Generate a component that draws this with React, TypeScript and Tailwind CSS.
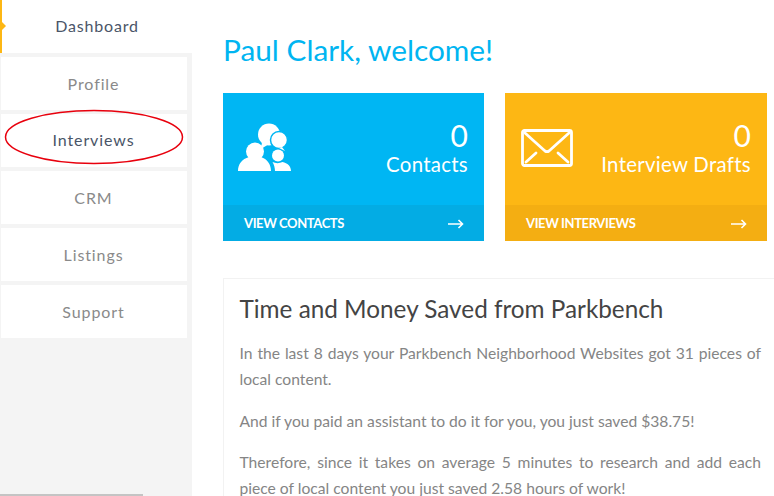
const items = [
  { label: "Profile", dark: false },
  { label: "Interviews", dark: true },
  { label: "CRM", dark: false },
  { label: "Listings", dark: false },
  { label: "Support", dark: false },
];

function Arrow() {
  return (
    <svg className="mt-[2px]" width="16" height="10" viewBox="0 0 16 10" fill="none" stroke="white" strokeWidth="1.6">
      <path d="M0 5h14.500M10.500 1l4 4-4 4" />
    </svg>
  );
}

function PeopleIcon() {
  return (
    <svg className="-mt-[4px]" width="54" height="50" viewBox="0 0 54 50" fill="white">
      <circle cx="31" cy="12.500" r="11" />
      <path d="M24 20l-1 7 8-5z" />
      <circle cx="41" cy="18" r="8.500" stroke="#00b6f3" strokeWidth="1.500" />
      <path d="M44 25l3 4-6-3z" />
      <circle cx="17" cy="29.500" r="9" />
      <path d="M0 49c0-7 4-12 11-14 4 2.500 8 2.500 12 0 6 2 10 7 10 14z" />
      <circle cx="40" cy="33.500" r="6" />
      <path d="M34.500 40c3 1.500 7 1.500 10 0 5 1 8.500 4 8.500 9H37c0-3-1-6.500-2.500-9z" />
    </svg>
  );
}

function MailIcon() {
  return (
    <svg className="ml-[1px] -mt-[3px]" width="52" height="38" viewBox="0 0 52 38" fill="none" stroke="white" strokeWidth="2.800" strokeLinecap="round" strokeLinejoin="round">
      <rect x="1.500" y="1.500" width="49" height="35" rx="2" />
      <path d="M4 4l20 18c1.500 1 2.500 1 4 0L48 4M5 33l10-9M47 33l-10-9" />
    </svg>
  );
}

function StatCard({ width, color, footer, count, label, link, icon }: { width: string; color: string; footer: string; count: string; label: string; link: string; icon: React.ReactNode }) {
  return (
    <div className={`${width} ${color} flex h-[148px] shrink-0 flex-col text-white`}>
      <div className="flex h-[112px] items-center justify-between pl-[15px] pr-[16px]">
        {icon}
        <div className="-mt-[7px] text-right">
          <div className="text-[30px] leading-[36px]">{count}</div>
          <div className="text-[20.400px] leading-[22px] tracking-[0.3px]">{label}</div>
        </div>
      </div>
      <div className={`${footer} flex h-[36px] items-center justify-between pl-[21px] pr-[20px]`}>
        <span className="mt-[1px] text-[13px] font-bold tracking-[-0.4px]">{link}</span>
        <Arrow />
      </div>
    </div>
  );
}

export default function App() {
  return (
    <div className="flex h-[496px] w-[774px] overflow-hidden bg-white font-['Lato',sans-serif]">
      <aside className="relative h-full w-[192px] shrink-0 bg-[#f4f4f4]">
        <div className="relative flex h-[53px] w-[192px] items-center justify-center border-l-2 border-[#fdb714] bg-white pb-[1px] text-[16px] tracking-[0.8px] text-[#4a5568]">
          Dashboard
          <span className="absolute left-0 top-[22px] h-0 w-0 border-y-[4px] border-l-[4px] border-y-transparent border-l-[#fdb714]" />
        </div>
        <div className="mt-[4px] flex w-[187px] flex-col gap-[4px] pl-[1px]">
          {items.map((item) => (
            <div
              key={item.label}
              className={`flex h-[53px] items-center justify-center bg-white pr-[1px] text-[16px] tracking-[0.9px] ${item.dark ? "pb-[1px] text-[#4a5568]" : "text-[#8a8a8a]"}`}
            >
              {item.label}
            </div>
          ))}
        </div>
        <div className="absolute bottom-0 left-0 h-[2px] w-[143px] bg-[#c4c4c4]" />
        <svg className="absolute left-[4px] top-[109px]" width="181" height="56" viewBox="0 0 181 56" fill="none">
          <ellipse cx="90" cy="28" rx="88.500" ry="26.500" stroke="#e8000d" strokeWidth="1.500" />
        </svg>
      </aside>

      <main className="min-w-0 flex-1 pl-[31px]">
        <h1 className="mt-[31px] text-[29.800px] leading-[38px] text-[#00b5f1]">Paul Clark, welcome!</h1>
        <div className="mt-[24px] flex gap-[21px]">
          <StatCard width="w-[261px]" color="bg-[#00b6f3]" footer="bg-[#03ace4]" count="0" label="Contacts" link="VIEW CONTACTS" icon={<PeopleIcon />} />
          <StatCard width="w-[262px]" color="bg-[#fdb714]" footer="bg-[#f4ae12]" count="0" label="Interview Drafts" link="VIEW INTERVIEWS" icon={<MailIcon />} />
        </div>
        <section className="mt-[37px] w-[560px] border border-[#f2f2f2] pl-[15.500px] pr-[21px] pt-[14px]">
          <h2 className="text-[24.300px] leading-[32px] text-[#444444]">Time and Money Saved from Parkbench</h2>
          <p className="mt-[15px] text-justify text-[15.650px] leading-[26px] text-[#858585]">
            In the last 8 days your Parkbench Neighborhood Websites got 31 pieces of local content.
          </p>
          <p className="mt-[16px] text-justify text-[15.650px] leading-[26px] text-[#858585]">
            And if you paid an assistant to do it for you, you just saved $38.75!
          </p>
          <p className="mt-[15px] text-justify text-[15.650px] leading-[26px] text-[#858585]">
            Therefore, since it takes on average 5 minutes to research and add each piece of local content you just saved 2.58 hours of work!
          </p>
        </section>
      </main>
    </div>
  );
}
